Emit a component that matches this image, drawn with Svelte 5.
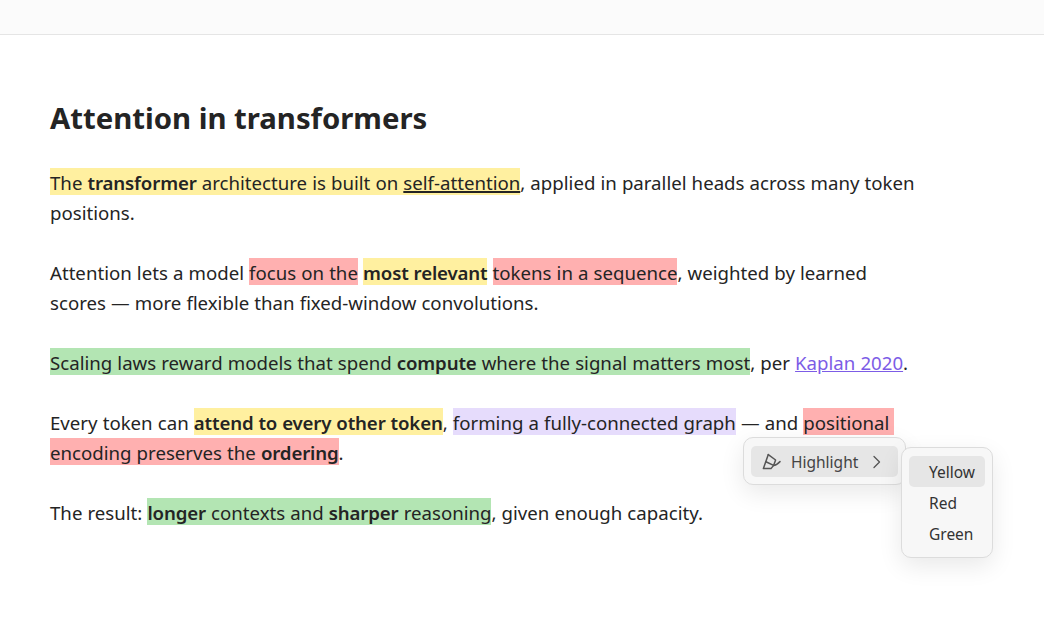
<script>
  const items = ['Yellow', 'Red', 'Green'];
</script>

<div class="page">
  <header class="topbar"></header>
  <main class="doc">
    <h1>Attention in transformers</h1>
    <p><mark class="y">The <b>transformer</b> architecture is built on <u>self-attention</u></mark>, applied in parallel heads across many token positions.</p>
    <p>Attention lets a model <mark class="r">focus on the</mark> <mark class="y"><b>most relevant</b></mark> <mark class="r">tokens in a sequence</mark>, weighted by learned scores — more flexible than fixed-window convolutions.</p>
    <p><mark class="g">Scaling laws reward models that spend <b>compute</b> where the signal matters most</mark>, per <a href="#k">Kaplan 2020</a>.</p>
    <p>Every token can <mark class="y"><b>attend to every other token</b></mark>, <mark class="p">forming a fully-connected graph</mark> — and <mark class="r">positional&nbsp;<wbr />encoding preserves the <b>ordering</b></mark>.</p>
    <p>The result: <mark class="g"><b>longer</b> contexts and <b>sharper</b> reasoning</mark>, given enough capacity.</p>
  </main>

  <div class="menu first">
    <div class="row active">
      <svg width="20" height="20" viewBox="0 0 20 20" fill="none" stroke="#555" stroke-width="1.5" stroke-linejoin="round" stroke-linecap="round">
        <path d="M7.3 2.6 L2.4 16.6 H10 L12.6 13.4" />
        <path d="M4.9 9.8 L12.6 13.4 L14.6 8 L7.3 2.6" />
        <path d="M12.6 13.4 C15 13.4 17 11.6 19 9.6" />
      </svg>
      <span class="label">Highlight</span>
      <svg class="chev" width="10" height="14" viewBox="0 0 10 14" fill="none" stroke="#555" stroke-width="1.3" stroke-linecap="round" stroke-linejoin="round"><path d="M2 1.5 L7.5 7 L2 12.5" /></svg>
    </div>
  </div>

  <div class="menu second">
    {#each items as item, i}
      <div class="opt" class:active={i === 0}><span>{item}</span></div>
    {/each}
  </div>
</div>

<style>
  :global(body) { margin: 0; background: #fff; }
  .page {
    position: relative;
    width: 1044px;
    height: 634px;
    overflow: hidden;
    font-family: "Noto Sans", "Open Sans", sans-serif;
    color: #242424;
  }
  .topbar { height: 34px; background: #fbfbfb; border-bottom: 1px solid #e5e5e5; }
  .doc { padding: 61px 0 0 50px; width: 870px; }
  h1 { margin: 0 0 28px; font-size: 29.3px; line-height: 44px; font-weight: 700; }
  p { margin: 0 0 30px; font-size: 18.65px; line-height: 30px; word-spacing: 0.25px; }
  b { font-weight: 600; letter-spacing: -0.14px; }
  mark { color: inherit; padding-top: 2px; -webkit-box-decoration-break: clone; box-decoration-break: clone; }
  .y { background: #fff0a0; }
  .r { background: #ffb0b0; }
  .g { background: #b3e5b3; }
  .p { background: #e6dcfc; }
  a { color: #7c5ce6; }
  u { text-decoration-thickness: 2px; }
  .menu {
    position: absolute;
    box-sizing: border-box;
    background: #f7f7f7;
    border: 1px solid #dcdcdc;
    border-radius: 10px;
    box-shadow: 0 8px 24px rgba(0,0,0,.09);
    font-size: 15.5px;
    color: #444;
  }
  .first { left: 743px; top: 437px; width: 163px; height: 48px; padding: 8px 7px; }
  .second { left: 901px; top: 447px; width: 92px; height: 111px; padding: 8px 7px; }
  .row { display: flex; align-items: center; height: 31px; border-radius: 5px; padding-left: 10px; }
  .row .label { margin-left: 10px; }
  .chev { margin-left: 14px; }
  .active { background: #e6e6e6; }
  .opt { height: 31px; line-height: 33px; padding-left: 20px; border-radius: 5px; color: #333; }
</style>
